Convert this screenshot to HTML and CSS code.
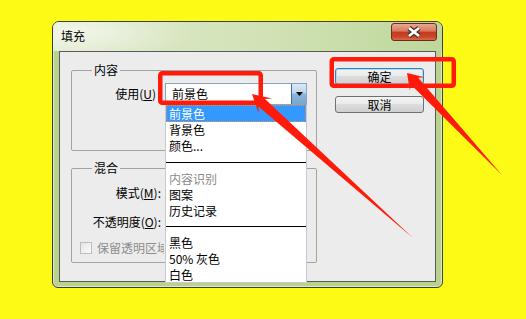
FILE: index.html
```html
<!DOCTYPE html>
<html lang="zh-CN">
<head>
    <meta charset="UTF-8">
    <meta name="viewport" content="width=device-width, initial-scale=1.0">
    <title>填充</title>
    <link rel="stylesheet" href="styles.css">
</head>
<body>
    <div class="window">
        <div class="titlebar">
            <span class="title">填充</span>
            <div class="close">
                <svg width="44" height="16" viewBox="0 0 44 16">
                    <path d="M17 4 L27 12 M27 4 L17 12" stroke="#4b2a22" stroke-width="5" fill="none"/>
                    <path d="M17 4 L27 12 M27 4 L17 12" stroke="#ffffff" stroke-width="2.8" fill="none"/>
                </svg>
            </div>
        </div>
        <div class="client">
            <div class="groups">
                <fieldset class="group group-content">
                    <legend>内容</legend>
                    <div class="row">
                        <label class="lbl lbl-use">使用(<u>U</u>)</label>
                        <div class="combo">
                            <span class="combo-value">前景色</span>
                            <span class="combo-btn">
                                <svg width="7" height="4" viewBox="0 0 7 4"><path d="M0 0 H7 L3.5 4 Z" fill="#000"/></svg>
                            </span>
                            <ul class="droplist">
                                <li class="selected">前景色</li>
                                <li>背景色</li>
                                <li>颜色...</li>
                                <li class="sep"></li>
                                <li class="disabled">内容识别</li>
                                <li>图案</li>
                                <li>历史记录</li>
                                <li class="sep sep-2"></li>
                                <li>黑色</li>
                                <li>50% 灰色</li>
                                <li>白色</li>
                            </ul>
                        </div>
                    </div>
                </fieldset>
                <fieldset class="group group-blend">
                    <legend>混合</legend>
                    <div class="row">
                        <label class="lbl lbl-blend">模式(<u>M</u>):</label>
                        <div class="combo combo-plain"></div>
                    </div>
                    <div class="row">
                        <label class="lbl lbl-blend">不透明度(<u>O</u>):</label>
                        <div class="combo combo-plain combo-short"></div>
                    </div>
                    <div class="row row-check">
                        <span class="checkbox"></span>
                        <span class="check-text">保留透明区域</span>
                    </div>
                </fieldset>
            </div>
            <div class="buttons">
                <button class="btn btn-default">确定</button>
                <button class="btn">取消</button>
            </div>
        </div>
    </div>

    <svg class="marks" width="526" height="319" viewBox="0 0 526 319">
        <rect x="160.25" y="73.25" width="100.5" height="29.5" rx="2" fill="none" stroke="#ff1a0a" stroke-width="4.5"/>
        <rect x="331.75" y="59.25" width="122" height="26.5" rx="2" fill="none" stroke="#ff1a0a" stroke-width="4.5"/>
        <polygon points="252,94 272.1,98.5 265,99 413,238 258.4,106.4 258.7,113.5" fill="#ff1a0a"/>
        <polygon points="407,73 424.5,77.2 418.2,77.7 502,175 410.8,84.5 409.9,90.8" fill="#ff1a0a"/>
    </svg>
</body>
</html>
```

FILE: styles.css
```css
body {
    margin: 0;
    padding: 21px 0 0 52px;
    background-color: #fdfb16;
    font-family: "Noto Sans CJK SC", "Noto Sans", sans-serif;
    font-size: 12px;
    color: #000;
    overflow: hidden;
}
.window {
    width: 391px;
    height: 267px;
    box-sizing: border-box;
    border: 1px solid #3e3e3e;
    border-radius: 7px 7px 6px 6px;
    background-color: #b9d38f;
    box-shadow: inset 0 0 0 1px rgba(255, 255, 255, 0.5);
    display: flex;
    flex-direction: column;
    overflow: hidden;
}
.titlebar {
    height: 29px;
    flex: none;
    display: flex;
    justify-content: space-between;
    align-items: flex-start;
    padding: 0 5px 0 8px;
    background:
        radial-gradient(ellipse 120px 30px at 20px 10px, rgba(255, 255, 255, 0.6), rgba(255, 255, 255, 0)),
        linear-gradient(to right, #dfe9cc 0%, #d3e3b8 50%, #bfd79b 100%);
}
.title {
    margin-top: 7px;
    line-height: 14px;
}
.close {
    margin-top: 1px;
    width: 46px;
    height: 18px;
    box-sizing: border-box;
    border: 1px solid #6e2a1c;
    border-radius: 3px;
    background: linear-gradient(#e9a792 0%, #d77a5e 45%, #c23a1e 50%, #c8472a 80%, #dc6a48 100%);
}
.close svg {
    display: block;
}
.client {
    flex: 1;
    margin: 0 6px 5px;
    border: 1px solid #595959;
    background-color: #ececec;
    display: flex;
    gap: 18px;
    padding: 11px 0 0 11px;
}
.groups {
    width: 246px;
}
.group {
    margin: 0;
    min-width: 0;
    box-sizing: border-box;
    width: 246px;
    border: 1px solid #a3a3a3;
    border-radius: 2px;
    padding: 0;
}
.group legend {
    margin-left: 20px;
    padding: 0 2px;
    line-height: 14px;
}
.group-content {
    padding: 6px 0 45px;
}
.group-blend {
    margin-top: 10px;
    padding: 7px 0 6px;
}
.row {
    display: flex;
    align-items: center;
    height: 22px;
}
.group-blend .row + .row {
    margin-top: 7px;
}
.group-blend .row-check {
    height: 16px;
    margin-top: 6px;
    padding-left: 8px;
}
.lbl {
    text-align: right;
    line-height: 14px;
}
.lbl-use {
    width: 84px;
    margin-right: 9px;
}
.lbl-blend {
    width: 89px;
    margin-right: 4px;
}
.combo {
    position: relative;
    width: 142px;
    height: 22px;
    box-sizing: border-box;
    border: 1px solid #8aa4c0;
    background-color: #fff;
    display: flex;
    align-items: center;
}
.combo-short {
    width: 60px;
}
.combo-value {
    padding-left: 6px;
    line-height: 14px;
}
.combo-btn {
    margin-left: auto;
    width: 15px;
    height: 20px;
    box-sizing: border-box;
    border-left: 1px solid #3c6f9c;
    background: linear-gradient(#dbe9f5 0%, #bcd6ea 45%, #8db5d8 50%, #7aa7cf 100%);
    display: flex;
    align-items: center;
    justify-content: center;
}
.combo-btn svg {
    display: block;
}
.droplist {
    position: absolute;
    z-index: 5;
    left: -1px;
    top: 21px;
    width: 142px;
    height: 178px;
    box-sizing: border-box;
    margin: 0;
    padding: 0;
    list-style: none;
    background-color: #fff;
    border: 1px solid #c7c7d6;
    border-top: 0;
    overflow: hidden;
}
.droplist li {
    line-height: 16px;
    padding-left: 3px;
    white-space: nowrap;
}
.droplist li.selected {
    line-height: 17px;
    background-color: #3399ff;
    color: #fff;
    outline: 1px dotted #e8904a;
    outline-offset: -1px;
}
.droplist li.disabled {
    color: #8a8a8a;
}
.droplist li.sep {
    height: 1px;
    padding: 0;
    margin: 8px 0;
    background-color: #000;
}
.droplist li.sep-2 {
    margin-top: 7px;
}
.checkbox {
    flex: none;
    width: 12px;
    height: 12px;
    box-sizing: border-box;
    border: 1px solid #bdbdbd;
    background: linear-gradient(135deg, #e6e6e6, #fafafa);
}
.check-text {
    margin-left: 5px;
    max-width: 67px;
    overflow: hidden;
    color: #8d8d8d;
    line-height: 14px;
    white-space: nowrap;
}
.buttons {
    display: flex;
    flex-direction: column;
    gap: 11px;
    padding-top: 5px;
}
.btn {
    width: 89px;
    height: 17px;
    padding: 0;
    box-sizing: border-box;
    border: 1px solid #707070;
    border-radius: 3px;
    background: linear-gradient(#f3f3f3 0%, #ebebeb 45%, #dddddd 50%, #cfcfcf 100%);
    font-family: inherit;
    font-size: 12px;
    line-height: 14px;
    color: #000;
}
.btn-default {
    border-color: #3c7fb1;
    box-shadow: inset 0 0 0 1px #a9dcf5;
}
.marks {
    position: absolute;
    z-index: 10;
    top: 0;
    left: 0;
    pointer-events: none;
}
```
